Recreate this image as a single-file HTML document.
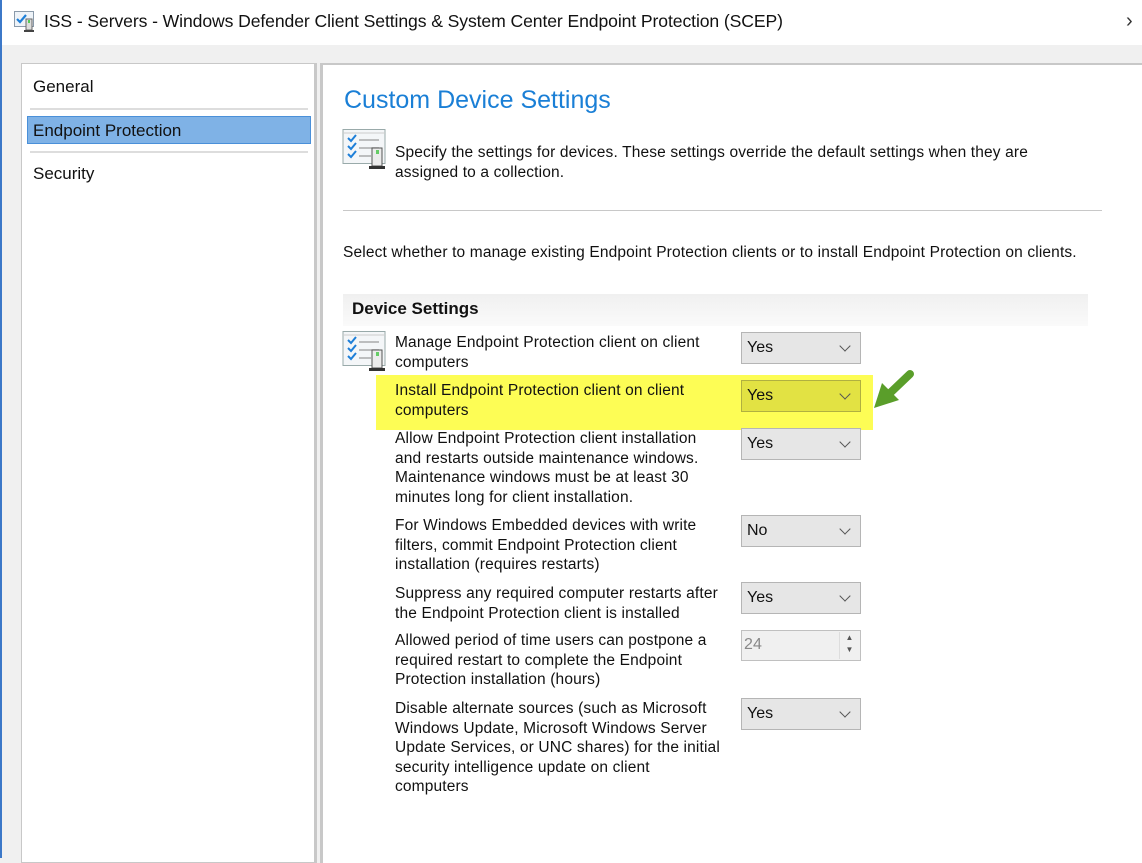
<!DOCTYPE html>
<html><head><meta charset="utf-8"><style>
*{margin:0;padding:0;box-sizing:border-box}
body{width:1142px;height:858px;overflow:hidden;background:#f0f0f0;font-family:"Liberation Sans",Arial,sans-serif;color:#111;position:relative;font-size:15.5px;letter-spacing:0.15px}
.abs{position:absolute}
.title{left:0;top:0;width:1142px;height:45px;background:#fff}
.left{left:21px;top:63px;width:296px;height:800px;background:#fff;border:1px solid #c8c8c8;border-right:3px solid #c8c8c8}
.right{left:320px;top:63px;width:830px;height:800px;background:#fff;border-left:3px solid #c8c8c8;border-top:2px solid #c8c8c8}
.nav{position:absolute;left:33px;font-size:17px;letter-spacing:0}
.sel{left:27px;top:116px;width:284px;height:28px;background:#7fb2e6;border:1px solid #4a90d9}
.sep{height:2px;background:#ddd;left:30px;width:278px}
.lbl{position:absolute;left:395px;line-height:19.5px;width:322px}
.dd{position:absolute;left:741px;width:120px;height:32px;background:#e6e6e6;border:1px solid #b5b5b5;padding:6px 0 0 5px;font-size:16px;letter-spacing:0}
.dd:after{content:"";position:absolute;right:11px;top:9px;width:7px;height:7px;border-right:1.3px solid #555;border-bottom:1.3px solid #555;transform:rotate(45deg)}
.icon{position:absolute}
</style></head><body>
<div class="abs title"></div>
<div class="abs" style="left:0;top:0;width:2px;height:858px;background:#3c78c8"></div>
<svg class="icon" style="left:14px;top:10px" width="22" height="24" viewBox="0 0 22 24"><rect x="0.5" y="1.5" width="19" height="15" fill="#eef3f8" stroke="#8a9aaa"/><path d="M3 9l3 3 6-7" stroke="#1e7fd8" stroke-width="2.2" fill="none"/><rect x="12" y="9" width="6" height="11" fill="#ddd" stroke="#666"/><rect x="14" y="10" width="2" height="3" fill="#5c5"/><rect x="10" y="20" width="10" height="2" fill="#444"/></svg>
<div class="abs" style="left:44px;top:11px;font-size:17.6px;letter-spacing:-0.1px">ISS - Servers - Windows Defender Client Settings &amp; System Center Endpoint Protection (SCEP)</div>
<div class="abs" style="left:1126px;top:10px;font-size:20px;color:#333">›</div>

<div class="abs left"></div>
<div class="nav" style="top:77px">General</div>
<div class="abs sep" style="top:108px"></div>
<div class="abs sel"></div>
<div class="nav" style="top:121px">Endpoint Protection</div>
<div class="abs sep" style="top:151px"></div>
<div class="nav" style="top:164px">Security</div>

<div class="abs right"></div>
<div class="abs" style="left:344px;top:86px;font-size:25px;color:#1a7fd6;letter-spacing:0">Custom Device Settings</div>
<svg class="icon" style="left:342px;top:128px" width="48" height="44" viewBox="0 0 48 44"><rect x="1" y="1.5" width="42" height="34" fill="#f4f6f8" stroke="#9aa"/><line x1="1" y1="5" x2="43" y2="5" stroke="#ccc"/><path d="M6 10l3 3 5-6M6 18l3 3 5-6M6 26l3 3 5-6" stroke="#1e7fd8" stroke-width="2" fill="none"/><path d="M17 12h20M17 20h20M17 28h12" stroke="#aaa" stroke-width="1.5"/><rect x="30" y="20" width="10" height="18" fill="#ececec" stroke="#555"/><rect x="34" y="22" width="3" height="4" fill="#6c6"/><rect x="27" y="38" width="16" height="3" fill="#333"/></svg>
<div class="abs" style="left:395px;top:143px;line-height:19.5px;width:660px">Specify the settings for devices. These settings override the default settings when they are assigned to a collection.</div>
<div class="abs" style="left:343px;top:210px;width:759px;height:1px;background:#c8c8c8"></div>
<div class="abs" style="left:343px;top:244px;white-space:nowrap">Select whether to manage existing Endpoint Protection clients or to install Endpoint Protection on clients.</div>
<div class="abs" style="left:343px;top:294px;width:745px;height:32px;background:linear-gradient(#f0f0f0,#fafafa)"></div>
<div class="abs" style="left:352px;top:299px;font-weight:bold;font-size:17px;letter-spacing:0">Device Settings</div>
<svg class="icon" style="left:342px;top:330px" width="48" height="44" viewBox="0 0 48 44"><rect x="1" y="1.5" width="42" height="34" fill="#f4f6f8" stroke="#9aa"/><line x1="1" y1="5" x2="43" y2="5" stroke="#ccc"/><path d="M6 10l3 3 5-6M6 18l3 3 5-6M6 26l3 3 5-6" stroke="#1e7fd8" stroke-width="2" fill="none"/><path d="M17 12h20M17 20h20M17 28h12" stroke="#aaa" stroke-width="1.5"/><rect x="30" y="20" width="10" height="18" fill="#ececec" stroke="#555"/><rect x="34" y="22" width="3" height="4" fill="#6c6"/><rect x="27" y="38" width="16" height="3" fill="#333"/></svg>
<div class="abs" style="left:376px;top:375px;width:497px;height:55px;background:#fdfd55"></div>

<div class="lbl" style="top:333px">Manage Endpoint Protection client on client computers</div>
<div class="dd" style="top:332px">Yes</div>
<div class="lbl" style="top:381px">Install Endpoint Protection client on client computers</div>
<div class="dd" style="top:380px;background:#e2e243;border-color:#b0b040">Yes</div>
<div class="lbl" style="top:429px">Allow Endpoint Protection client installation and restarts outside maintenance windows. Maintenance windows must be at least 30 minutes long for client installation.</div>
<div class="dd" style="top:428px">Yes</div>
<div class="lbl" style="top:516px;width:316px">For Windows Embedded devices with write filters, commit Endpoint Protection client installation (requires restarts)</div>
<div class="dd" style="top:515px">No</div>
<div class="lbl" style="top:584px;width:340px">Suppress any required computer restarts after the Endpoint Protection client is installed</div>
<div class="dd" style="top:582px">Yes</div>
<div class="lbl" style="top:631px">Allowed period of time users can postpone a required restart to complete the Endpoint Protection installation (hours)</div>
<div class="abs" style="left:741px;top:630px;width:120px;height:31px;background:#f0f0f0;border:1px solid #c0c0c0;padding:5px 0 0 2px;color:#888;font-size:16px">24
<div class="abs" style="right:1px;top:1px;width:20px;height:27px;border-left:1px solid #ddd;font-size:8px;color:#555;text-align:center;line-height:12px">▲<br>▼</div></div>
<div class="lbl" style="top:699px;width:325px">Disable alternate sources (such as Microsoft Windows Update, Microsoft Windows Server Update Services, or UNC shares) for the initial security intelligence update on client computers</div>
<div class="dd" style="top:698px">Yes</div>

<svg class="icon" style="left:868px;top:365px" width="52" height="50" viewBox="0 0 52 50"><path d="M42 9L20 30" stroke="#5a9e2a" stroke-width="8" stroke-linecap="round"/><path d="M6 43L14 18L31 35Z" fill="#5a9e2a"/></svg>
</body></html>
